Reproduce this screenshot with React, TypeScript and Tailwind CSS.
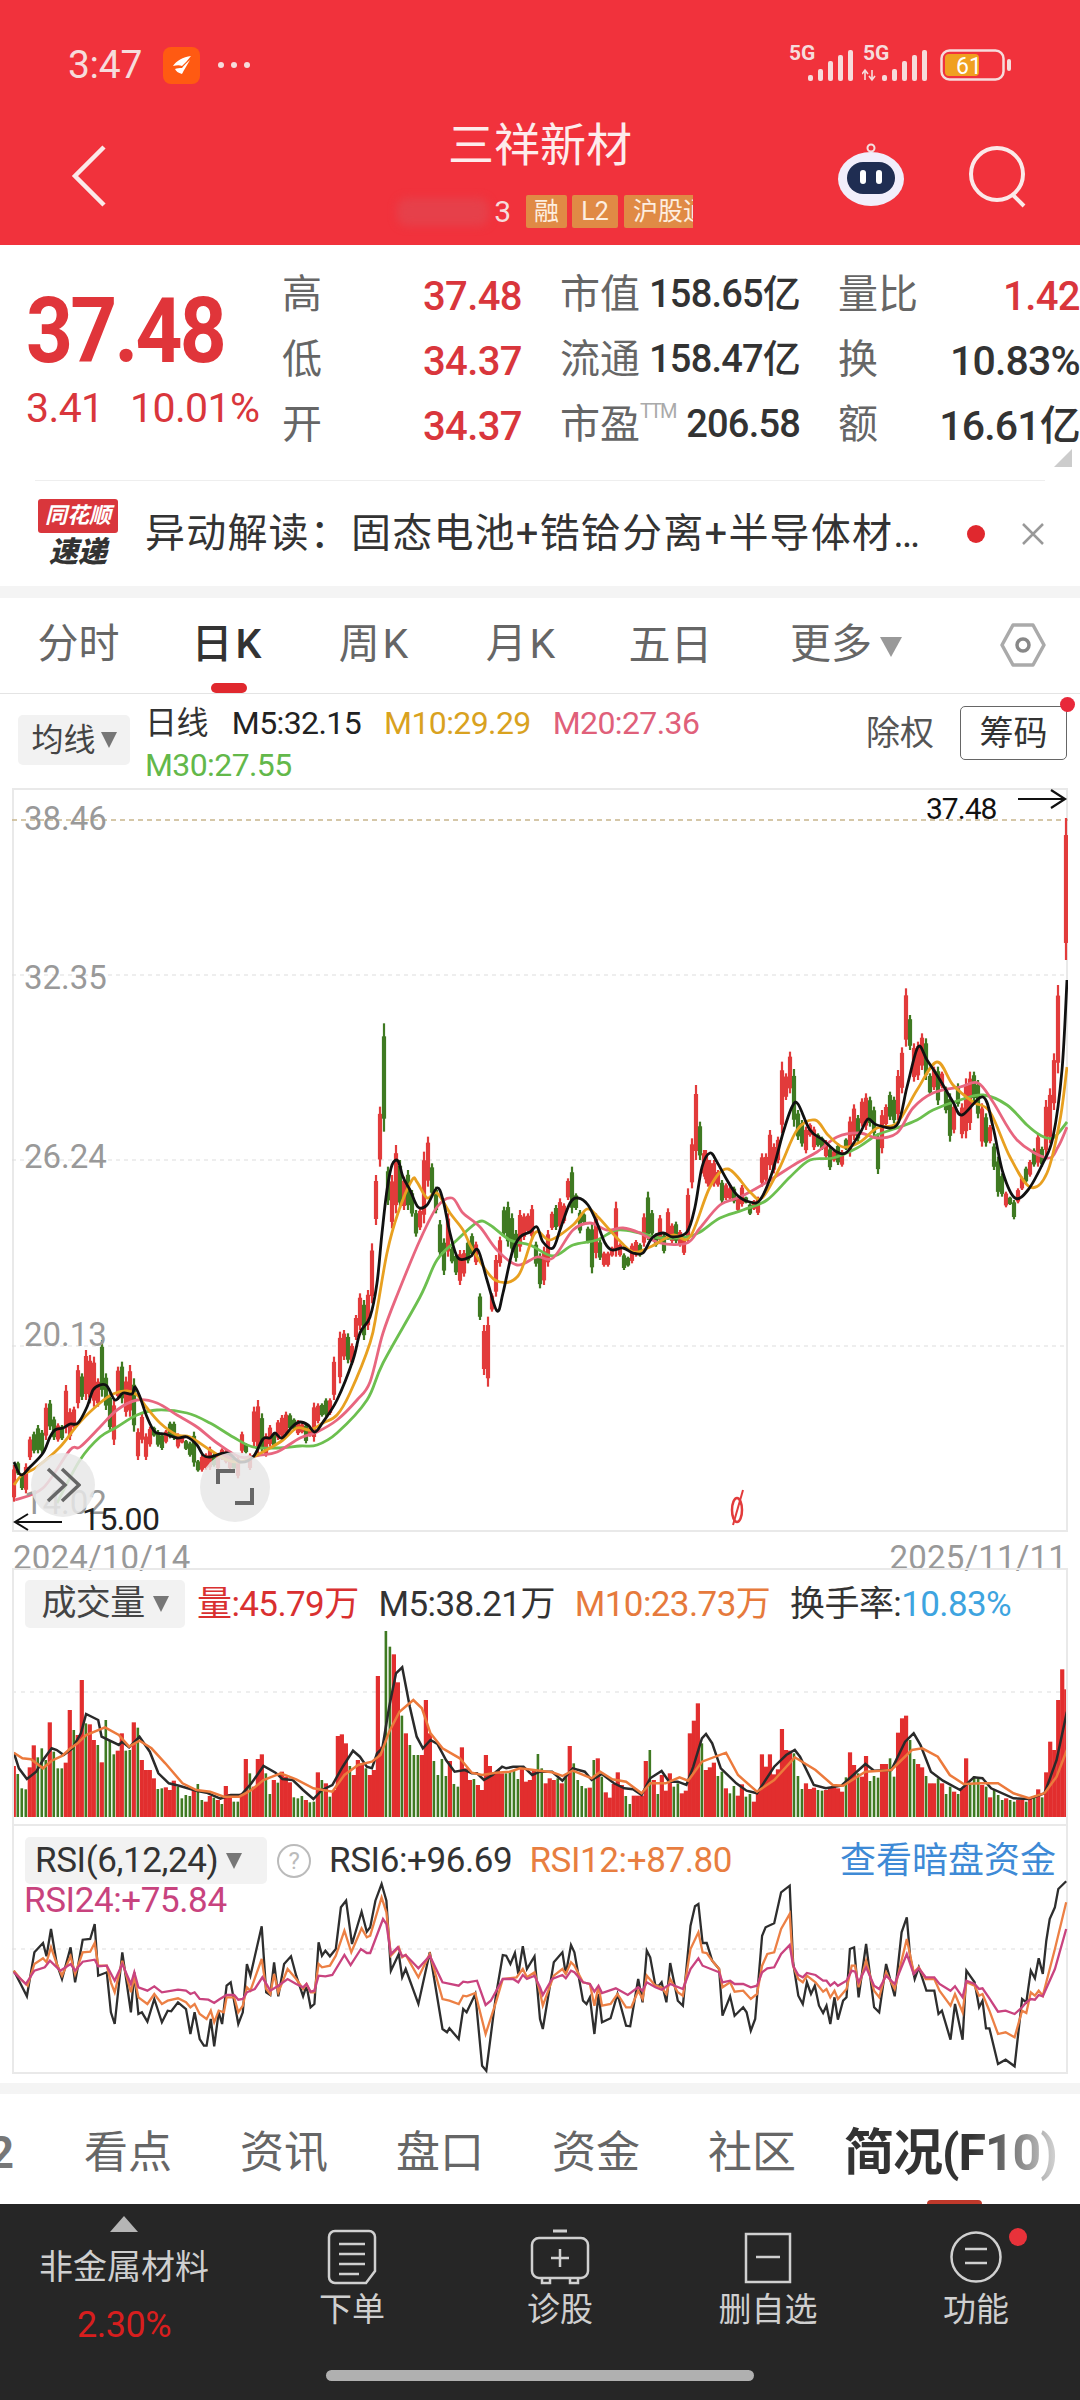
import React from "react";

type P = number[][];
const smooth = (p: P) => {
  let d = `M${p[0][0]} ${p[0][1]}`;
  for (let i = 0; i < p.length - 1; i++) {
    const a = p[Math.max(i - 1, 0)], b = p[i], c = p[i + 1], e = p[Math.min(i + 2, p.length - 1)];
    d += ` C${(b[0] + (c[0] - a[0]) / 6).toFixed(1)} ${(b[1] + (c[1] - a[1]) / 6).toFixed(1)} ${(c[0] - (e[0] - b[0]) / 6).toFixed(1)} ${(c[1] - (e[1] - b[1]) / 6).toFixed(1)} ${c[0]} ${c[1]}`;
  }
  return d;
};
const pairs = (f: number[]) => {
  const o: P = [];
  for (let i = 0; i < f.length; i += 2) o.push([f[i], f[i + 1]]);
  return o;
};
const SX = 1568 / 540;
const tf = (f: number[], ox: number, oy: number) => pairs(f).map(([x, y]) => [+(ox + x / SX).toFixed(1), +(oy + y / 3).toFixed(1)]);
const poly = (p: P) => p.map((q) => q.join(",")).join(" ");

const M5 = pairs([14,1462,21,1475,30,1467,43,1453,50,1437,55,1430,63,1428,70,1424,78,1423,87,1407,93,1390,100,1385,107,1386,115,1400,123,1393,132,1394,135,1387,140,1397,147,1417,155,1432,165,1434,177,1438,187,1437,197,1445,203,1455,210,1457,227,1453,240,1462,253,1457,263,1439,270,1438,275,1433,282,1438,293,1426,300,1422,308,1425,315,1432,323,1422,337,1400,353,1360,360,1333,370,1317,377,1283,382,1233,387,1190,392,1165,398,1161,403,1177,410,1190,418,1207,427,1205,437,1188,443,1200,450,1233,458,1258,470,1257,478,1250,487,1280,497,1311,503,1293,512,1253,520,1237,530,1232,537,1227,543,1242,553,1248,560,1230,570,1203,578,1198,588,1205,597,1223,605,1243,612,1250,623,1248,633,1253,643,1253,652,1238,663,1233,673,1237,687,1232,695,1207,702,1167,710,1153,717,1162,727,1180,737,1195,750,1202,760,1200,772,1173,783,1133,792,1107,798,1104,810,1130,823,1140,837,1152,847,1152,860,1133,868,1119,877,1125,897,1125,907,1087,918,1047,927,1060,940,1080,953,1102,962,1115,983,1097,993,1127,1003,1173,1015,1198,1028,1190,1043,1163,1053,1137,1062,1070,1067,980]);
const M10 = pairs([14,1485,22,1475,37,1467,60,1447,80,1422,100,1403,113,1394,127,1391,137,1395,147,1408,160,1423,177,1435,190,1437,210,1450,227,1460,240,1462,253,1457,270,1448,283,1440,297,1428,310,1430,323,1423,337,1415,350,1393,370,1343,377,1310,387,1253,398,1213,412,1180,417,1182,427,1198,437,1193,450,1213,463,1230,473,1250,495,1280,518,1276,535,1233,550,1240,573,1225,587,1209,598,1217,617,1238,633,1252,650,1247,673,1235,690,1237,710,1187,728,1169,750,1192,762,1198,780,1167,797,1130,815,1120,828,1135,843,1147,860,1142,877,1128,897,1123,917,1090,937,1062,953,1085,973,1102,990,1112,1010,1157,1030,1187,1047,1173,1060,1120,1067,1067]);
const M20 = pairs([15,1500,43,1488,70,1450,80,1447,100,1427,117,1410,137,1400,157,1403,177,1415,197,1427,217,1443,240,1457,260,1455,277,1452,300,1438,317,1432,337,1420,357,1400,370,1382,383,1333,398,1293,420,1240,437,1207,452,1198,463,1213,480,1227,497,1250,517,1265,537,1257,553,1258,573,1230,590,1223,607,1230,623,1228,640,1233,660,1243,687,1243,700,1228,720,1205,740,1197,767,1182,797,1163,817,1152,837,1137,860,1133,877,1138,897,1133,913,1108,933,1093,960,1087,978,1083,993,1102,1017,1140,1047,1158,1058,1147,1067,1127]);
const M30 = pairs([57,1503,80,1460,100,1437,117,1427,137,1415,157,1410,187,1413,210,1423,233,1437,253,1447,277,1448,300,1446,317,1445,337,1433,367,1400,383,1363,420,1297,437,1260,457,1240,478,1222,490,1225,510,1240,530,1245,553,1256,573,1245,597,1240,617,1230,640,1233,660,1238,687,1237,700,1232,720,1218,743,1210,767,1200,790,1177,810,1160,833,1158,857,1148,877,1135,897,1128,917,1120,933,1110,960,1100,983,1095,1007,1105,1027,1125,1040,1135,1053,1138,1067,1122]);

// pairs of top,bottom in crop coordinates; a negative top means a green candle
const C6 = [675,785,-665,705,-700,750,670,760,590,660,-575,640,-555,640,-570,640,490,600,-480,570,-530,600,550,605,-555,600,435,580,505,600,500,570,375,505,-400,480,330,480,345,490,350,500,415,500,-300,470,-400,510,-460,575,480,615,380,480,-365,490,410,530,375,530,-415,575,565,660,520,610,580,660,560,620,-560,590,-570,620,-580,630,570,610,-545,595,-545,600,580,625,590,610,-600,630,-605,650,-575,680,-660,695,645,695,640,690,620,690,-640,680,640,690,625,660,630,670,640,690,-650,690,650,715,575,640,-610,640,640,690,500,620,480,640,-520,640,580,650,555,620,-580,620,540,600,525,595,515,590,-520,570,-535,570,540,585,550,580,-550,610,560,590,488,605,490,550,-490,530,-475,530,475,525,350,480];
const C7 = [995,1150,990,1080,-1000,1090,1030,1095,945,1020,880,990,-900,1020,870,990,730,910,525,675,320,500,-70,395,-500,615,525,685,435,640,-480,625,530,630,-510,630,-570,650,-630,710,625,690,455,670,410,560,-490,590,-560,640,-660,770,-715,825,640,770,-740,790,-760,825,750,855,750,830,-720,790,-700,770,725,795,-880,960,975,1125,950,1160,880,935,765,890,710,800,-620,710,-605,740,-640,760,-690,785,630,755,640,720,640,700,615,720,-725,800,-760,865,740,855,690,800,635,690,-615,690,595,690,610,670,535,600,-500,640,-580,630,-630,700,-640,670,-680,730,-670,820,640,775,-720,780,755,800,755,800,740,770,605,770,730,770,-760,810,-770,800,730,790,720,770,-730,770,640,740,-575,720,-630,710,-700,740,645,730,-700,760,625,720,670,730,-665,730,690,740,710,765,565,730,415,565,255,480,-365,480,450,530,480,560];
const C8 = [540,640,570,650,570,650,600,650,-630,700,640,690,650,690,-650,700,680,725,645,710,-680,700,-700,735,690,720,680,735,550,650,550,640,480,600,520,610,500,580,275,490,310,390,245,370,-297,470,-420,510,-450,530,470,550,460,500,470,540,-490,530,-500,540,510,565,-530,600,540,575,-520,585,540,590,-505,540,440,560,403,510,-435,515,385,470,370,480,-380,470,-410,500,-490,612,420,550,403,470,-365,450,-380,460,300,450,232,370,55,230,-135,240,220,335,215,330,190,300,-205,330,-310,375,290,360,-290,405,305,355,-350,430,-370,515,400,490,-340,410,400,505,325,505,305,480,-305,395,-330,445,400,530,-430,530,465,520,-520,600,-560,680,-610,680,665,712,-680,705,-690,748,655,700,620,660,-590,640,570,620,-535,590,490,590,-530,590,390,560,355,520,250,420,45,310];
const candles: { x: number; t: number; b: number; g: boolean }[] = [];
const addC = (f: number[], ox: number, oy: number, start: number) => {
  for (let i = 0; i < f.length; i += 2) {
    candles.push({ x: ox + (start + 6 * i) / 3, t: oy + Math.abs(f[i]) / 3, b: oy + f[i + 1] / 3, g: f[i] < 0 });
  }
};
addC(C6, 0, 1240, 42);
addC(C7, 340, 1000, 0);
addC(C8, 700, 970, 18);
candles.push({ x: 1066, t: 818, b: 960, g: false });

const V9 = [438,-462,-505,-508,442,376,-412,-385,-420,307,-395,-445,-445,428,270,-330,345,180,-310,313,360,-375,427,-300,-360,-403,392,340,-392,-390,307,-323,420,450,450,475,-507,-505,502,510,482,-500,-535,-525,-528,510,-492,-540,545,528,-533,540,-552,498,522,-545,-545,520,417,-460,500,417,403,-460,-522,480,-488,455,470,487,-532,-535,-528,540,-547,-545,457,-480,490,-530,510,348,343,370,-438,465,420,430,-445,465,450,168,380,-33,-80,103,187,-287,340,-375,-405,-405,405,240,340,-423,-465,-417,-468,423,-492,-500,382,445,480,-477,495,510,405,438,460,450,460,-460,-455,-450,-477,440,485,480,450,-402];
const V10 = [-445,490,475,480,-475,490,-470,378,-430,-480,-498,-505,503,-420,415,-470,517,533,492,457,495,-528,-552,527,527,527,423,-390,480,-522,465,512,460,-500,-490,520,512,340,302,250,-370,450,442,428,-468,-455,505,-520,-498,527,493,-530,-522,545,510,403,440,403,463,448,327,390,392,-400,-468,-507,490,507,503,-510,-512,510,503,500,505,515,-472,397,435,-460,470,408,-483,-468,-473,432,432,-415,-470,338,295,287,-360,-417,432,442,-468,490,490,-475,490,-522,-500,515,-522,505,415,-490,-468,-475,495,-500,532,-510,-525,-540,535,-540,-545,540,540,-545,535,-532,508,-532,457,365,390,240,148,208];

const VB = [...tf([40,398,55,445,78,477,105,455,125,420,150,385,165,390,185,405,210,385,235,340,250,282,285,300,295,350,345,375,355,365,375,382,405,350,435,395,460,460,490,490,520,497,570,512,600,518,640,536,670,525,700,525,730,490,765,438,800,458,820,477,850,480,880,510,910,537,935,510,965,495,995,440,1025,392,1045,410,1065,440,1080,445,1095,400,1110,385,1130,260,1150,160,1168,142,1190,260,1210,350,1228,385,1250,360,1270,372,1295,420,1320,455,1350,450,1370,460,1385,460,1405,480,1430,465,1458,440,1470,445,1490,440,1520,440,1545,465,1568,455], 0, 1620), ...tf([35,455,65,482,95,445,130,455,150,480,180,462,215,490,245,505,270,508,295,525,320,475,353,453,375,485,400,485,425,495,445,440,470,355,482,342,500,370,525,445,570,490,600,512,630,520,680,440,715,405,740,390,755,410,795,495,830,505,875,497,945,432,970,452,1020,450,1060,365,1085,340,1105,375,1135,455,1170,482,1220,510,1260,472,1285,475,1310,505,1375,535,1420,537,1465,520,1500,420,1530,275], 540, 1620)];
const VO = [...tf([40,398,65,415,90,418,125,445,150,422,180,408,205,385,225,370,250,345,305,322,345,345,375,380,405,362,440,385,480,430,530,490,570,510,610,515,650,530,695,530,730,510,765,480,815,460,860,478,910,505,965,515,1000,465,1040,435,1080,425,1105,405,1130,335,1160,275,1200,240,1225,265,1250,340,1285,385,1335,415,1370,458,1400,465,1440,458,1480,455,1510,445,1568,452], 0, 1620), ...tf([35,457,65,468,95,452,150,475,175,455,210,478,250,485,295,520,320,490,365,490,405,472,430,482,470,425,540,398,575,465,630,515,680,480,740,412,800,450,850,495,880,497,945,455,1020,450,1080,390,1110,385,1155,410,1190,465,1230,492,1280,490,1330,490,1375,520,1420,535,1465,520,1500,470,1530,390], 540, 1620)];

const RB = [...tf([40,305,60,345,78,382,100,250,125,222,135,262,148,180,165,285,180,330,205,235,218,340,240,212,262,210,275,165,285,320,310,310,322,430,333,465,355,250,380,430,390,310,402,435,412,430,428,458,448,390,470,460,487,425,497,427,517,400,540,420,553,495,565,430,580,510,592,530,600,530,612,450,622,532,635,430,645,465,658,350,670,340,692,465,705,430,717,285,727,320,760,172,773,370,785,378,796,280,808,382,825,285,845,262,860,320,880,382,890,350,902,415,913,405,925,220,935,260,945,245,958,262,975,240,990,115,1005,95,1022,225,1050,128,1065,188,1075,175,1090,95,1108,45,1122,95,1135,305,1158,255,1168,325,1178,300,1215,405,1248,250,1285,480,1298,490,1305,478,1332,510,1345,420,1355,430,1380,375,1400,590,1412,605,1440,380,1460,258,1470,260,1482,285,1495,252,1505,315,1518,232,1530,300,1552,262,1568,450], 0, 1870), ...tf([8,480,40,280,65,250,75,315,90,228,100,250,125,395,135,405,145,385,158,495,170,375,180,460,205,448,225,375,250,470,262,472,285,330,298,400,310,245,320,265,335,350,345,350,353,340,367,400,378,282,400,395,415,410,437,170,450,112,460,105,472,222,484,222,500,275,520,300,530,440,552,382,565,440,590,415,600,430,612,485,625,450,645,200,655,175,680,163,700,70,725,50,735,280,750,380,763,405,775,340,787,375,798,350,810,410,822,432,832,410,843,465,855,385,865,452,880,395,890,385,900,240,912,235,925,385,947,225,970,415,985,430,1005,285,1030,382,1050,190,1065,145,1075,265,1088,330,1100,295,1122,365,1145,365,1157,435,1167,425,1192,512,1205,405,1227,512,1238,305,1262,340,1275,415,1285,395,1295,478,1305,478,1330,585,1352,572,1378,592,1400,390,1412,400,1425,305,1437,328,1448,268,1460,315,1470,215,1480,150,1495,115,1505,60,1528,37], 540, 1870)];
const RO = [...tf([40,305,60,330,80,350,100,285,125,268,135,280,148,235,165,285,180,320,205,262,218,315,240,250,262,248,275,222,285,290,310,290,322,340,333,370,355,275,380,370,390,325,402,385,428,405,448,375,470,405,487,395,517,388,540,400,553,415,565,405,580,435,600,450,612,425,622,460,635,425,650,430,658,385,680,385,692,430,705,410,717,355,727,365,760,270,773,360,785,375,796,315,808,370,835,300,860,330,880,360,890,345,902,370,913,370,925,285,935,295,958,290,975,260,1000,185,1020,250,1050,178,1065,205,1075,200,1108,85,1122,130,1135,260,1158,235,1168,265,1178,258,1215,325,1248,255,1285,390,1305,395,1332,405,1345,380,1355,382,1380,372,1410,495,1440,400,1460,330,1500,325,1518,300,1530,325,1552,310,1568,370], 0, 1870), ...tf([8,410,40,320,65,300,75,315,90,280,100,290,125,340,145,345,158,410,170,352,180,410,205,405,225,375,250,415,265,415,285,365,298,390,310,320,335,350,353,355,367,375,378,330,400,370,415,380,437,240,460,190,472,250,484,252,500,275,520,300,530,355,552,340,565,368,590,365,612,390,630,375,645,290,660,255,680,250,700,180,725,135,735,290,750,330,763,340,775,320,800,340,822,368,832,360,843,385,855,365,865,390,890,360,905,290,915,290,925,355,947,275,970,365,985,385,1005,310,1030,360,1065,210,1085,310,1100,295,1120,330,1145,330,1160,365,1192,410,1205,375,1227,430,1238,340,1262,350,1275,380,1285,375,1305,425,1330,495,1352,490,1378,505,1400,425,1412,432,1425,370,1437,380,1448,365,1460,380,1495,240,1528,100], 540, 1870)];
const RM = [...tf([40,310,75,345,100,305,130,295,145,275,175,305,205,285,218,305,240,278,275,272,285,292,310,290,333,335,355,285,380,345,390,310,402,355,428,365,448,352,470,370,517,362,540,365,553,375,565,370,580,390,605,392,622,402,635,392,658,378,680,378,692,392,705,390,717,370,740,360,762,325,785,365,808,350,835,330,860,345,880,355,890,345,902,368,913,365,925,320,945,322,965,318,1000,258,1018,288,1048,240,1065,252,1075,252,1112,150,1122,165,1135,255,1155,235,1168,262,1178,258,1215,298,1248,260,1285,340,1332,350,1345,338,1358,340,1385,335,1410,408,1425,395,1460,330,1490,330,1505,340,1518,318,1530,330,1552,320,1568,355], 0, 1870), ...tf([8,378,35,330,65,318,75,328,90,305,100,310,125,340,145,345,158,368,170,350,180,372,220,358,255,378,285,355,298,365,310,340,335,355,353,362,378,345,415,360,437,300,460,268,472,290,520,310,530,340,552,335,565,345,590,345,612,355,630,350,645,310,660,298,680,295,700,255,725,228,735,290,750,318,763,325,775,312,800,318,822,335,832,335,843,350,855,340,865,350,890,335,905,305,915,308,925,340,947,295,970,350,985,360,1005,320,1030,345,1065,255,1085,315,1100,298,1120,325,1145,325,1160,345,1192,365,1205,352,1227,385,1238,335,1262,345,1275,360,1285,358,1305,388,1330,428,1352,425,1378,435,1400,415,1412,400,1425,390,1437,392,1448,378,1460,382,1495,300,1528,180], 540, 1870)];

const volBars = (v: number[], first: number, last: number, ox: number) => {
  const step = (last - first) / (v.length - 1);
  return v.map((n, i) => ({ x: ox + (first + i * step) / SX, y: 1620 + Math.abs(n) / 3, g: n < 0 }));
};
const bars = [...volBars(V9, 40, 1562, 0), ...volBars(V10, 5, 1528, 540)];

function Signal({ arrows }: { arrows?: boolean }) {
  return (
    <div className="relative w-[66px] h-[36px]">
      <span className="absolute left-[1px] -top-[6px] text-[21px] leading-[24px] font-bold text-[#f6dcdc]">5G</span>
      <svg width="66" height="36" viewBox="0 0 66 36" className="block">
        {arrows && <path d="M3 33V23M0 27l3-4 3 4M10 23v10M7 29l3 4 3-4" stroke="#f6dcdc" strokeWidth="1.6" fill="none" />}
        <rect x="20" y="28" width="5" height="6" rx="2" fill="#f6dcdc" />
        <rect x="30" y="22" width="5" height="12" rx="2" fill="#f6dcdc" />
        <rect x="40" y="14" width="5" height="20" rx="2" fill="#f6dcdc" />
        <rect x="50" y="8" width="5" height="26" rx="2" fill="#f6dcdc" />
        <rect x="60" y="3" width="5" height="31" rx="2" fill="#f6dcdc" />
      </svg>
    </div>
  );
}

function Stat({ label, value, red, extra, big }: { label: string; value: string; red?: boolean; extra?: string; big?: boolean }) {
  const cls = red
    ? "text-[40px] leading-[65px] font-medium tracking-[-0.6px] text-[#d9363c] translate-y-[2px]"
    : big
      ? "text-[41px] leading-[65px] font-medium tracking-[-0.8px] text-[#333333] translate-y-[2px]"
      : "text-[38px] leading-[65px] font-medium tracking-[-0.8px] text-[#333333]";
  return (
    <div className="flex items-center justify-between whitespace-nowrap">
      <span className="text-[40px] leading-[65px] text-[#666666]">
        {label}
        {extra && <sup className="text-[20px] text-[#aaaaaa] align-[10px] tracking-[-2px]">{extra}</sup>}
      </span>
      <span className={cls}>{value}</span>
    </div>
  );
}

const Tri = () => <span className="inline-block w-0 h-0 border-x-[8px] border-x-transparent border-t-[16px] border-t-[#777777]" />;

export default function App() {
  const cjk = { fontFamily: 'Roboto, "Noto Sans CJK SC", sans-serif' };
  return (
    <div style={cjk} className="relative w-[1080px] h-[2400px] overflow-hidden bg-white flex flex-col">
      <header className="h-[245px] bg-[#f1323c] flex flex-col shrink-0">
        <div className="h-[120px] pt-[10px] flex items-center pl-[68px] pr-[68px] text-[#f6dcdc]">
          <span className="text-[39px] w-[95px] tracking-[-0.3px]">3:47</span>
          <span className="w-[37px] h-[37px] rounded-[8px] bg-[#ff5a12] flex items-center justify-center">
            <svg width="24" height="24" viewBox="0 0 24 24"><path d="M21 3C13 4 6 8 3 13c4-1 7-1 9 0 3-3 6-6 9-10zM12 15c-3 0-5 0-7 1 1 2 3 4 7 5 2-4 5-9 8-14-3 3-6 5-8 8z" fill="#fff" /></svg>
          </span>
          <span className="ml-[18px] flex gap-[7px]">
            <i className="w-[6px] h-[6px] rounded-full bg-[#f6dcdc]" />
            <i className="w-[6px] h-[6px] rounded-full bg-[#f6dcdc]" />
            <i className="w-[6px] h-[6px] rounded-full bg-[#f6dcdc]" />
          </span>
          <span className="ml-auto flex items-center gap-[8px]">
            <Signal />
            <Signal arrows />
            <svg width="72" height="32" viewBox="0 0 72 32" className="ml-[4px]">
              <rect x="1.5" y="1.5" width="62" height="29" rx="8" fill="none" stroke="#f6dcdc" strokeWidth="2.5" />
              <rect x="5" y="5" width="34" height="22" rx="4" fill="#f0a020" />
              <rect x="67" y="10" width="4" height="12" rx="2" fill="#f6dcdc" />
              <text x="29" y="25" textAnchor="middle" fontSize="23" fill="#fff" fontFamily="Roboto, sans-serif">61</text>
            </svg>
          </span>
        </div>
        <div className="h-[125px] flex">
          <div className="w-[240px] pl-[70px] pt-[25px]">
            <svg width="38" height="62" viewBox="0 0 38 62"><path d="M34 2 5 31l29 29" fill="none" stroke="#fbe9e9" strokeWidth="4.5" /></svg>
          </div>
          <div className="w-[600px] flex flex-col items-center">
            <div className="text-[46px] leading-[50px] text-[#fdecec]">三祥新材</div>
            <div className="mt-[25px] flex items-center ml-[10px]">
              <span className="w-[92px] h-[28px] rounded-[10px] bg-[#e6404a] blur-[4px]" />
              <span className="w-[22px] text-[30px] leading-[33px] text-[#f6dcdc] text-right mr-[15px]">3</span>
              <span className="w-[41px] h-[33px] rounded-[2px] bg-[#e08a45] text-[#fdeee0] text-[25px] leading-[33px] text-center">融</span>
              <span className="w-[46px] h-[33px] ml-[5px] rounded-[2px] bg-[#e08a45] text-[#fdeee0] text-[25px] leading-[33px] text-center">L2</span>
              <span className="w-[69px] h-[33px] ml-[6px] rounded-l-[2px] bg-[#e08a45] text-[#fdeee0] text-[25px] leading-[33px] pl-[9px] overflow-hidden whitespace-nowrap">沪股通</span>
            </div>
          </div>
          <div className="w-[240px] flex items-start pt-[22px]">
            <svg width="72" height="66" viewBox="0 0 72 66" className="-ml-[5px]">
              <circle cx="36" cy="6" r="3.5" fill="none" stroke="#f4dede" strokeWidth="2" />
              <ellipse cx="36" cy="37" rx="33" ry="27" fill="#f1eefb" />
              <rect x="12" y="20" width="48" height="32" rx="16" fill="#1f2d52" />
              <rect x="25" y="28" width="6" height="14" rx="3" fill="#fff" />
              <rect x="41" y="28" width="6" height="14" rx="3" fill="#fff" />
            </svg>
            <svg width="62" height="62" viewBox="0 0 62 62" className="ml-[61px] mt-[4px]">
              <circle cx="29" cy="28" r="26" fill="none" stroke="#fbe9e9" strokeWidth="4" />
              <path d="M44 48 l12 12" stroke="#fbe9e9" strokeWidth="4" />
            </svg>
          </div>
        </div>
      </header>

      <section className="relative h-[235px] flex shrink-0">
        <div className="w-[282px] pl-[26px] pt-[45px] whitespace-nowrap">
          <div className="text-[90px] leading-[84px] font-bold tracking-[-3px] text-[#e0353a] origin-left scale-x-[0.91]">37.48</div>
          <div className="mt-[10px] flex text-[41px] leading-[48px] text-[#d9363c] tracking-[-0.6px]">
            <span className="w-[104px]">3.41</span>
            <span>10.01%</span>
          </div>
        </div>
        <div className="grid grid-cols-[240px_240px_242px] gap-x-[38px] auto-rows-[65px] pt-[17px] h-fit">
          <Stat label="高" value="37.48" red />
          <Stat label="市值" value="158.65亿" />
          <Stat label="量比" value="1.42" red />
          <Stat label="低" value="34.37" red />
          <Stat label="流通" value="158.47亿" />
          <Stat label="换" value="10.83%" big />
          <Stat label="开" value="34.37" red />
          <Stat label="市盈" extra="TTM" value="206.58" />
          <Stat label="额" value="16.61亿" big />
        </div>
        <svg width="18" height="18" viewBox="0 0 18 18" className="absolute left-[1054px] top-[204px]"><path d="M18 0V18H0Z" fill="#cccccc" /></svg>
      </section>

      <div className="mx-[35px] h-[1px] bg-[#eeeeee] shrink-0" />

      <div className="h-[105px] flex items-center shrink-0">
        <div className="ml-[37px] w-[82px] flex flex-col items-center">
          <div className="relative w-[80px] h-[34px] bg-[#d9363c] rounded-[3px] -skew-x-[4px] text-white text-[22px] leading-[34px] text-center font-bold italic whitespace-nowrap">同花顺</div>
          <div className="text-[29px] leading-[34px] mt-[2px] font-black italic text-[#333333] whitespace-nowrap">速递</div>
        </div>
        <div className="ml-[26px] w-[809px] text-[40px] text-[#333333] whitespace-nowrap overflow-hidden tracking-[1.2px]">异动解读：固态电池+锆铪分离+半导体材…</div>
        <span className="ml-[13px] w-[18px] h-[18px] rounded-full bg-[#e0282e]" />
        <svg width="24" height="24" viewBox="0 0 24 24" className="ml-[36px]"><path d="M2 2 22 22M22 2 2 22" stroke="#999999" strokeWidth="2.5" /></svg>
      </div>

      <div className="h-[12px] bg-[#f4f4f4] shrink-0" />

      <nav className="relative h-[96px] shrink-0 border-b border-[#e4e4e4] flex items-center pl-[5px] pb-[1px] text-[41px] text-[#666666]">
        <span className="w-[147px] text-center">分时</span>
        <span className="w-[147px] pl-[5px] text-center text-[#333333] font-medium tracking-[3px]">日K</span>
        <span className="w-[147px] pl-[5px] text-center tracking-[3px]">周K</span>
        <span className="w-[147px] pl-[5px] text-center tracking-[3px]">月K</span>
        <span className="w-[150px] text-center pl-[5px] text-[42px]">五日</span>
        <span className="ml-[47px] flex items-center gap-[8px]">更多<span className="w-0 h-0 border-x-[11px] border-x-transparent border-t-[20px] border-t-[#999999] mt-[4px]" /></span>
        <svg width="46" height="46" viewBox="0 0 46 46" className="ml-[98px]"><path d="M13 3h20l11 20-11 20H13L2 23Z" fill="none" stroke="#aaaaaa" strokeWidth="3.5" strokeLinejoin="round" /><circle cx="23" cy="23" r="6" fill="none" stroke="#888888" strokeWidth="3.5" /></svg>
        <span className="absolute left-[211px] bottom-0 w-[36px] h-[10px] rounded-full bg-[#e0282e]" />
      </nav>

      <div className="relative h-[94px] shrink-0 flex items-start pr-[13px]">
        <div className="ml-[18px] mt-[21px] w-[112px] h-[50px] rounded-[5px] bg-[#f2f2f2] flex items-center justify-center gap-[5px] text-[32px] text-[#444444]">均线<Tri /></div>
        <div className="ml-[15px] mt-[8px] w-[680px] text-[32px] leading-[42px] tracking-[-0.6px]">
          <span className="text-[#333333]">日线</span>
          <span className="ml-[24px] text-[#222222]">M5:32.15</span>
          <span className="ml-[23px] text-[#d9a21f]">M10:29.29</span>
          <span className="ml-[22px] text-[#e0607a]">M20:27.36</span>
          <div className="text-[#63b84a]">M30:27.55</div>
        </div>
        <span className="ml-auto mt-[16px] text-[34px] leading-[46px] text-[#555555] whitespace-nowrap">除权</span>
        <div className="ml-[26px] mt-[12px] w-[107px] h-[54px] rounded-[5px] border border-[#666666] text-[34px] leading-[52px] text-center text-[#333333]">筹码</div>
        <span className="absolute left-[1060px] top-[3px] w-[15px] h-[15px] rounded-full bg-[#e8283a]" />
      </div>

      <div className="relative mx-[12px] w-[1056px] h-[744px] shrink-0 border-2 border-[#e9e9e9]">
        <svg width="1056" height="744" viewBox="12 788 1056 744" className="absolute -left-[2px] -top-[2px]">
          <line x1="12" x2="1068" y1="820" y2="820" stroke="#c8b58c" strokeWidth="1.5" strokeDasharray="5 4" />
          {[975, 1160, 1346].map((y) => <line key={y} x1="12" x2="1068" y1={y} y2={y} stroke="#dddddd" strokeWidth="1.2" strokeDasharray="4 4" />)}
          {candles.map((c, i) => {
            const h = c.b - c.t;
            const col = c.g ? "#3f7a22" : "#e23b3b";
            return (
              <g key={i}>
                <rect x={c.x - 1.1} y={c.t} width="2.2" height={h} fill={col} />
                <rect x={c.x - 2.1} y={c.t + h * 0.12} width="4.2" height={h * 0.76} fill={col} />
              </g>
            );
          })}
          <path d={smooth(M30)} fill="none" stroke="#6cbf4f" strokeWidth="2.8" />
          <path d={smooth(M20)} fill="none" stroke="#e8667f" strokeWidth="2.8" />
          <path d={smooth(M10)} fill="none" stroke="#e8a020" strokeWidth="2.8" />
          <path d={smooth(M5)} fill="none" stroke="#111111" strokeWidth="2.8" />
          <ellipse cx="737" cy="1510" rx="5" ry="12" fill="none" stroke="#e23b3b" strokeWidth="2.5" />
          <path d="M743 1490 733 1525" stroke="#e23b3b" strokeWidth="2" />
          <path d="M1018 799h46m-13-9 14 9-14 9" fill="none" stroke="#111111" strokeWidth="2.2" />
        </svg>
        <span className="absolute left-[10px] top-[9px] text-[33px] leading-[40px] text-[#999999]">38.46</span>
        <span className="absolute left-[10px] top-[168px] text-[33px] leading-[40px] text-[#999999]">32.35</span>
        <span className="absolute left-[10px] top-[347px] text-[33px] leading-[40px] text-[#999999]">26.24</span>
        <span className="absolute left-[10px] top-[525px] text-[33px] leading-[40px] text-[#999999]">20.13</span>
        <span className="absolute left-[10px] top-[693px] text-[33px] leading-[40px] text-[#999999]">14.02</span>
        <span className="absolute left-[912px] top-[0px] text-[30px] leading-[38px] tracking-[-1px] text-[#111111]">37.48</span>
        <div className="absolute left-[17px] top-[663px] w-[64px] h-[64px] rounded-full bg-[#e8e8e8]/85 flex items-center justify-center">
          <svg width="36" height="36" viewBox="0 0 36 36"><path d="M3 2 20 18 3 34M17 2 34 18 17 34" fill="none" stroke="#666666" strokeWidth="3.5" /></svg>
        </div>
        <div className="absolute left-[186px] top-[662px] w-[70px] h-[70px] rounded-full bg-[#e8e8e8]/85 flex items-center justify-center">
          <svg width="38" height="36" viewBox="0 0 38 36"><path d="M2 15V2h17M19 34h17V19" fill="none" stroke="#666666" strokeWidth="4" /></svg>
        </div>
        <svg width="50" height="18" viewBox="0 0 50 18" className="absolute left-[-1px] top-[723px]"><path d="M49 9H2m13-8L2 9l13 8" fill="none" stroke="#111111" strokeWidth="2" /></svg>
        <span className="absolute left-[68px] top-[710px] text-[32px] leading-[38px] tracking-[-0.6px] text-[#222222]">15.00</span>
      </div>

      <div className="h-[36px] mx-[13px] shrink-0 flex justify-between pt-[8px] text-[33px] leading-[36px] tracking-[0.2px] text-[#999999] whitespace-nowrap">
        <span>2024/10/14</span>
        <span>2025/11/11</span>
      </div>

      <div className="mx-[12px] w-[1056px] h-[258px] shrink-0 border-2 border-[#e9e9e9] flex flex-col">
        <div className="h-[60px] shrink-0 flex items-start text-[35px] leading-[46px] tracking-[-0.6px] whitespace-nowrap">
          <div className="ml-[11px] mt-[10px] w-[160px] h-[48px] rounded-[5px] bg-[#f2f2f2] flex items-center justify-center gap-[8px] text-[#444444]">成交量<Tri /></div>
          <div className="ml-[12px] mt-[12px] flex">
            <span className="text-[#d93030]">量:45.79万</span>
            <span className="ml-[20px] text-[#333333]">M5:38.21万</span>
            <span className="ml-[20px] text-[#e67a3c]">M10:23.73万</span>
            <span className="ml-[20px] text-[#333333]">换手率:<span className="text-[#3ea4e0]">10.83%</span></span>
          </div>
        </div>
        <svg width="1052" height="194" viewBox="14 1630 1052 194" className="block">
          <line x1="12" x2="1068" y1="1692" y2="1692" stroke="#dddddd" strokeWidth="1.2" strokeDasharray="4 5" />
          {bars.map((b, i) => (
            <rect key={i} x={b.g ? b.x - 1.3 : b.x - 2.1} y={b.y} width={b.g ? 2.6 : 4.2} height={1817 - b.y} fill={b.g ? "#3f7a22" : "#e22e2e"} />
          ))}
          <polyline points={poly(VB)} fill="none" stroke="#2a2a2a" strokeWidth="2.5" />
          <polyline points={poly(VO)} fill="none" stroke="#ec7a3c" strokeWidth="2.5" />
        </svg>
      </div>

      <div className="relative mx-[12px] w-[1056px] h-[248px] shrink-0 border-2 border-t-0 border-[#e9e9e9] flex flex-col">
        <div className="h-[58px] shrink-0 flex items-start text-[35px] leading-[46px] tracking-[-0.4px] whitespace-nowrap">
          <div className="ml-[11px] mt-[11px] w-[242px] h-[47px] rounded-[5px] bg-[#f2f2f2] flex items-center gap-[8px] pl-[10px] text-[#333333]">RSI(6,12,24)<Tri /></div>
          <span className="ml-[10px] mt-[18px] w-[34px] h-[34px] rounded-full border-2 border-[#bbbbbb] text-[24px] leading-[30px] text-center text-[#bbbbbb] shrink-0">?</span>
          <span className="ml-[18px] mt-[12px] text-[#333333]">RSI6:+96.69</span>
          <span className="ml-[17px] mt-[12px] text-[#e87e40]">RSI12:+87.80</span>
          <span className="ml-[108px] mt-[12px] text-[36px] tracking-normal text-[#3e8ad6]">查看暗盘资金</span>
        </div>
        <svg width="1052" height="188" viewBox="14 1885 1052 188" className="block overflow-visible">
          <line x1="12" x2="1068" y1="1950" y2="1950" stroke="#dddddd" strokeWidth="1.2" strokeDasharray="4 5" />
          <polyline points={poly(RB)} fill="none" stroke="#2e2e2e" strokeWidth="2.3" />
          <polyline points={poly(RO)} fill="none" stroke="#ec8045" strokeWidth="2.3" />
          <polyline points={poly(RM)} fill="none" stroke="#c9437f" strokeWidth="2.3" />
        </svg>
        <span className="absolute left-[10px] top-[54px] text-[35px] leading-[42px] tracking-[-0.4px] text-[#c8437e]">RSI24:+75.84</span>
      </div>

      <div className="h-[9px] shrink-0" />
      <div className="h-[11px] bg-[#f4f4f4] shrink-0" />

      <div className="relative h-[110px] shrink-0 flex items-center pt-[8px] text-[44px] text-[#666666] whitespace-nowrap">
        <span className="w-[14px] overflow-hidden flex justify-end font-bold text-[#777777]">2</span>
        <span className="ml-[70px]">看点</span>
        <span className="ml-[68px]">资讯</span>
        <span className="ml-[68px]">盘口</span>
        <span className="ml-[68px]">资金</span>
        <span className="ml-[68px]">社区</span>
        <span className="ml-[48px] text-[50px] font-bold tracking-[-1px] bg-linear-to-r from-[#333333] from-60% to-[#d5d5d5] bg-clip-text text-transparent">简况(F10)</span>
        <span className="absolute left-[927px] bottom-0 w-[55px] h-[4px] rounded-t-[4px] bg-[#c0392b]" />
      </div>

      <footer className="flex-1 bg-[#262626] flex flex-col">
        <div className="h-[166px] flex text-[#cfcfcf]">
          <div className="w-[248px] flex flex-col items-center pt-[12px]">
            <span className="w-0 h-0 border-x-[14px] border-x-transparent border-b-[16px] border-b-[#b5b5b5]" />
            <span className="mt-[13px] text-[34px] leading-[44px]">非金属材料</span>
            <span className="mt-[14px] text-[36px] leading-[44px] tracking-[-0.5px] text-[#d81e1e]">2.30%</span>
          </div>
          <div className="w-[208px] flex flex-col items-center pt-[25px]">
            <svg width="50" height="56" viewBox="0 0 50 56"><path d="M8 2h34a6 6 0 0 1 6 6v34l-9 12H8a6 6 0 0 1-6-6V8a6 6 0 0 1 6-6Z" fill="none" stroke="#d0d0d0" strokeWidth="2.5" /><path d="M12 15h26M12 25h26M12 35h26M12 45h20" stroke="#d0d0d0" strokeWidth="2.5" /></svg>
            <span className="mt-[3px] text-[33px] leading-[44px]">下单</span>
          </div>
          <div className="w-[208px] flex flex-col items-center pt-[25px]">
            <svg width="60" height="56" viewBox="0 0 60 56"><path d="M23 2h14" stroke="#d0d0d0" strokeWidth="3" /><rect x="2" y="9" width="56" height="40" rx="7" fill="none" stroke="#d0d0d0" strokeWidth="2.5" /><path d="M30 20v18M21 29h18" stroke="#d0d0d0" strokeWidth="2.5" /><path d="M12 50v4h8v-4M40 50v4h8v-4" fill="none" stroke="#d0d0d0" strokeWidth="2.5" /></svg>
            <span className="mt-[3px] text-[33px] leading-[44px]">诊股</span>
          </div>
          <div className="w-[208px] flex flex-col items-center pt-[28px]">
            <svg width="48" height="53" viewBox="0 0 48 53"><rect x="2" y="2" width="44" height="48" fill="none" stroke="#d0d0d0" strokeWidth="2.5" /><path d="M12 25h24" stroke="#d0d0d0" strokeWidth="2.5" /></svg>
            <span className="mt-[3px] text-[33px] leading-[44px]">删自选</span>
          </div>
          <div className="relative w-[208px] flex flex-col items-center pt-[25px]">
            <svg width="54" height="56" viewBox="0 0 54 56"><circle cx="27" cy="28" r="24.5" fill="none" stroke="#d0d0d0" strokeWidth="2.5" /><path d="M16 20h22M16 34h22" stroke="#d0d0d0" strokeWidth="2.5" /></svg>
            <span className="mt-[3px] text-[33px] leading-[44px]">功能</span>
            <span className="absolute left-[137px] top-[24px] w-[18px] h-[18px] rounded-full bg-[#e8323a]" />
          </div>
        </div>
        <div className="mx-auto w-[428px] h-[11px] rounded-full bg-[#b0b0b0]" />
      </footer>
    </div>
  );
}
